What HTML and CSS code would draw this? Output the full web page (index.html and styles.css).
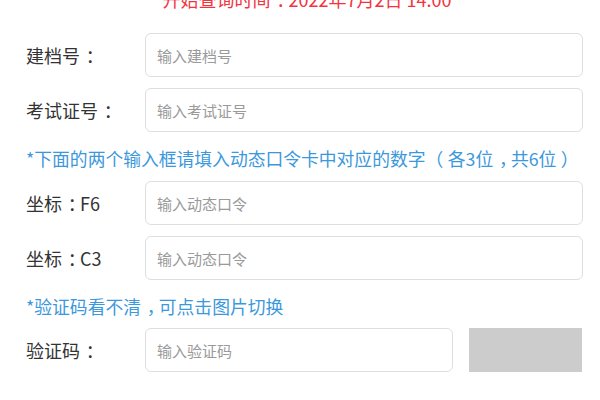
FILE: index.html
```html
<!DOCTYPE html>
<html lang="zh-CN">
<head>
<meta charset="utf-8">
<title>查询</title>
<link rel="stylesheet" href="styles.css">
</head>
<body>
<div class="page">
  <div class="title">开始查询时间<span class="punct">：</span>2022年7月2日 14:00</div>
  <form class="form">
    <div class="row">
      <label class="label">建档号<span class="punct">：</span></label>
      <input class="field" type="text" placeholder="输入建档号">
    </div>
    <div class="row">
      <label class="label">考试证号<span class="punct">：</span></label>
      <input class="field" type="text" placeholder="输入考试证号">
    </div>
    <div class="note">*下面的两个输入框请填入动态口令卡中对应的数字<span class="paren open">（</span>各3位<span class="punct">，</span>共6位<span class="paren close">）</span></div>
    <div class="row">
      <label class="label">坐标<span class="punct">：</span>F6</label>
      <input class="field" type="text" placeholder="输入动态口令">
    </div>
    <div class="row">
      <label class="label">坐标<span class="punct">：</span>C3</label>
      <input class="field" type="text" placeholder="输入动态口令">
    </div>
    <div class="note">*验证码看不清<span class="punct">，</span>可点击图片切换</div>
    <div class="row captcha-row">
      <label class="label">验证码<span class="punct">：</span></label>
      <input class="field short" type="text" placeholder="输入验证码">
      <div class="captcha"></div>
    </div>
  </form>
</div>
</body>
</html>
```
FILE: styles.css
```css
html, body {
  margin: 0;
  padding: 0;
  background: #ffffff;
}

body {
  font-family: "Noto Sans CJK SC", "Microsoft YaHei", sans-serif;
  color: #333333;
  overflow: hidden;
}

.page {
  padding: 0 17px 0 26px;
}

/* centre full-width punctuation like Microsoft YaHei */
.punct {
  padding-left: 0.32em;
  letter-spacing: -0.32em;
}

.paren {
  display: inline-block;
  width: 1.25em;
}

.paren.open {
  text-align: left;
}

.paren.close {
  text-align: right;
}

.title {
  margin-top: -13px;
  height: 24px;
  line-height: 24px;
  font-size: 18px;
  color: #f2343f;
  text-align: center;
  padding-left: 5px;
}

.form {
  margin-top: 22px;
  display: flex;
  flex-direction: column;
}

.row {
  display: flex;
  align-items: center;
  height: 44px;
}

.row + .row {
  margin-top: 11px;
}

.label {
  width: 119px;
  flex: none;
  font-size: 18px;
  color: #333333;
}

.field {
  flex: 1;
  min-width: 0;
  height: 44px;
  box-sizing: border-box;
  margin: 0;
  padding: 0 11px;
  border: 1px solid #dedede;
  border-radius: 6px;
  font-family: "Noto Sans CJK SC", sans-serif;
  font-size: 15px;
  color: #333333;
  background: #ffffff;
  outline: none;
}

.field::placeholder {
  color: #9a9a9a;
}

.field.short {
  flex: none;
  width: 308px;
}

.captcha {
  width: 113px;
  height: 45px;
  margin-left: 16px;
  background: #cccccc;
}

.note {
  margin: 14px 0 11px;
  height: 24px;
  line-height: 24px;
  font-size: 17.8px;
  color: #3c98dc;
  white-space: nowrap;
}

.note + .row.captcha-row {
  margin-top: -1px;
}
```
